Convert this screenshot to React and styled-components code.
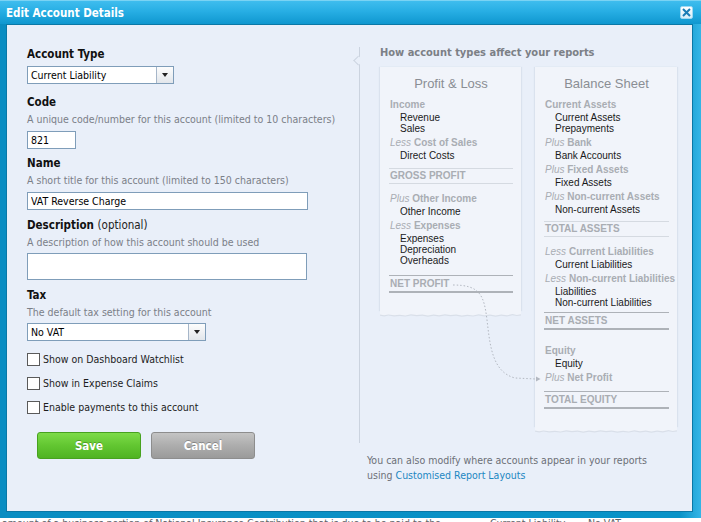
import React from "react";
import styled, { createGlobalStyle, css } from "styled-components";

const UI = `"DejaVu Sans Condensed", "DejaVu Sans", Tahoma, sans-serif`;
const SANS = `"Liberation Sans", Arial, Helvetica, sans-serif`;

const GlobalStyle = createGlobalStyle`
  html, body { margin: 0; padding: 0; background: #ffffff; }
  body { overflow: hidden; }
  *, *::before, *::after { box-sizing: border-box; }
`;

const Page = styled.div`
  width: 701px;
  height: 522px;
  overflow: hidden;
  background: #fff;
  display: flex;
  flex-direction: column;
`;

const Dialog = styled.div`
  flex: none;
  height: 518px;
  display: flex;
  flex-direction: column;
  background: linear-gradient(90deg, #0a8dc2 0%, #0993c8 97%, #35b5e6 100%);
`;

const TitleBar = styled.div`
  flex: none;
  height: 24px;
  display: flex;
  align-items: center;
  justify-content: space-between;
  padding: 0 8px 0 6px;
  background: linear-gradient(180deg, #3fbdee 0%, #27aee4 45%, #0f97cf 100%);
  border-top: 1px solid #7ad3f4;
`;

const Title = styled.h1`
  margin: 0;
  font: bold 11.5px/14px ${UI};
  color: #fff;
`;

const CloseButton = styled.button`
  width: 13px;
  height: 13px;
  padding: 0;
  border: 1px solid #9fd8f2;
  border-radius: 2px;
  background: linear-gradient(#ffffff, #d6edf9);
  display: flex;
  align-items: center;
  justify-content: center;
`;

const Body = styled.div`
  flex: 1;
  margin: 0 8px 6px 6px;
  background: #e9eff9;
  border: 1px solid #0a78a6;
  display: grid;
  grid-template-columns: 352px 1fr;
`;

/* ---------- left form ---------- */

const Form = styled.div`
  display: flex;
  flex-direction: column;
  align-items: flex-start;
  padding: 21px 0 0 20px;
`;

const FieldLabel = styled.div`
  font: bold 11.5px/16px ${UI};
  color: #111;
  margin-top: ${(p) => p.$mt || 0}px;
`;

const Optional = styled.span`
  font-weight: normal;
  color: #222;
`;

const Help = styled.div`
  font: 10.5px/18px ${UI};
  color: #7b8088;
`;

const fieldBox = css`
  display: block;
  height: ${(p) => p.$h || 18}px;
  width: ${(p) => p.$w}px;
  margin: ${(p) => p.$mt || 0}px 0 0 0;
  border: 1px solid #7f9db9;
  background: #fff;
  font: 10.5px/16px ${UI};
  color: #000;
  padding: 0 3px;
  outline: none;
`;

const TextInput = styled.input`
  ${fieldBox}
`;

const TextArea = styled.textarea`
  ${fieldBox}
  resize: none;
`;

const Select = styled.div`
  ${fieldBox}
  display: flex;
  padding: 0;
`;

const SelectValue = styled.span`
  flex: 1;
  padding-left: 3px;
  font: 10.5px/16px ${UI};
  color: #000;
`;

const SelectButton = styled.span`
  width: 17px;
  border-left: 1px solid #a6b6c9;
  background: linear-gradient(#fdfdfd, #e2e6eb);
  display: flex;
  align-items: center;
  justify-content: center;
  &::after {
    content: "";
    border-left: 3.5px solid transparent;
    border-right: 3.5px solid transparent;
    border-top: 4px solid #222;
  }
`;

const Checks = styled.div`
  margin-top: 6px;
  display: flex;
  flex-direction: column;
`;

const CheckRow = styled.label`
  height: 24px;
  display: flex;
  align-items: center;
  gap: 3px;
  font: 10.5px/14px ${UI};
  color: #1d1d1d;
`;

const CheckBox = styled.input`
  appearance: none;
  margin: 0;
  width: 13px;
  height: 13px;
  border: 1px solid #5a5a5a;
  background: #fff;
`;

const Buttons = styled.div`
  display: flex;
  gap: 10px;
  margin: 13px 0 0 10px;
`;

const Button = styled.button`
  width: 104px;
  height: 27px;
  border-radius: 3px;
  font: bold 11.5px/14px ${UI};
  color: #fff;
  text-shadow: 0 -1px 0 rgba(0, 0, 0, 0.25);
  padding: 0;
  ${(p) =>
    p.$variant === "save"
      ? css`
          background: linear-gradient(#7ddb48 0%, #62c631 50%, #4fb322 100%);
          border: 1px solid #47a21f;
        `
      : css`
          background: linear-gradient(#c4c4c4 0%, #adadad 50%, #9a9a9a 100%);
          border: 1px solid #8d8d8d;
        `}
`;

/* ---------- right diagram ---------- */

const RightColumn = styled.div`
  display: flex;
  flex-direction: column;
  padding-top: 22px;
`;

const Diagram = styled.div`
  position: relative;
  border-left: 1px solid #cbd3df;
  padding: 0 0 9px 20px;
  &::before {
    content: "";
    position: absolute;
    left: -5.5px;
    top: 10px;
    width: 6.5px;
    height: 6.5px;
    transform: rotate(45deg);
    border-left: 1px solid #cbd3df;
    border-bottom: 1px solid #cbd3df;
    background: #e9eff9;
  }
`;

const DiagramHeading = styled.div`
  font: bold 11px/12px ${UI};
  color: #7c8086;
`;

const Cards = styled.div`
  display: flex;
  align-items: flex-start;
  gap: 14px;
  margin-top: 8px;
`;

const Card = styled.div`
  width: ${(p) => p.$w}px;
  display: flex;
  flex-direction: column;
`;

const CardBody = styled.div`
  background: #f1f4fa;
  padding: 0 8px 12px 9px;
  box-shadow: -1px 0 1px rgba(150, 165, 190, 0.18), 1px 0 1px rgba(150, 165, 190, 0.18);
  display: flex;
  flex-direction: column;
  font-family: ${SANS};
`;

const CardTitle = styled.div`
  font: 13px/18px ${SANS};
  color: #8a8e94;
  text-align: center;
  margin: 8px 0 3px;
`;

const SectionLabel = styled.div`
  font: bold 10px/12px ${SANS};
  color: #a9adb3;
  white-space: nowrap;
  margin-top: ${(p) => (p.$mt != null ? p.$mt : 3)}px;
  padding-left: 1px;
`;

const Prefix = styled.i`
  font-weight: normal;
`;

const Items = styled.div`
  margin-top: 1px;
  padding-left: 11px;
  display: flex;
  flex-direction: column;
`;

const Item = styled.div`
  font: 10px/11px ${SANS};
  color: #1a1a1a;
  white-space: nowrap;
`;

const Total = styled.div`
  margin: ${(p) => p.$mt}px 0 6px;
  padding-left: 1px;
  font: bold 10px/${(p) => (p.$strong ? 15 : 14)}px ${SANS};
  color: #a9adb3;
  ${(p) =>
    p.$strong
      ? css`
          border-top: 1px solid #aeb2b8;
          border-bottom: 2px solid #aeb2b8;
        `
      : css`
          border-top: 1px solid #d5dae1;
          border-bottom: 1px solid #d5dae1;
        `}
`;

const TornSvg = styled.svg`
  display: block;
  width: 100%;
  height: 7px;
`;

const Connector = styled.svg`
  position: absolute;
  left: 0;
  top: 0;
  width: 100%;
  height: 100%;
  pointer-events: none;
  overflow: visible;
`;

const Footnote = styled.p`
  margin: 10px 0 0;
  padding-left: 8px;
  font: 10.5px/15px ${UI};
  color: #6c7077;
`;

const Link = styled.a`
  color: #1c87c2;
  text-decoration: none;
`;

/* ---------- page behind ---------- */

const BehindStrip = styled.div`
  flex: 1;
  overflow: hidden;
  display: grid;
  grid-template-columns: 488px 98px 1fr;
  padding-left: 2px;
  font: 10.5px/11px ${UI};
  color: #5d6166;
  white-space: nowrap;
`;

const BehindText = styled.span`
  overflow: hidden;
`;

const TORN =
  "M0 0 H100 V3.2 L97 3.9 L94 3.1 L90 4.3 L86 3.6 L82 4.5 L78 3.5 L74 4.2 L70 3.3 L66 4.4 L62 3.7 L58 4.6 L54 3.6 L50 4.1 L46 3.2 L42 4.3 L38 3.6 L34 4.5 L30 3.5 L26 4.1 L22 3.3 L18 4.4 L14 3.7 L10 4.3 L6 3.4 L3 4.2 L0 3.6 Z";

function TornEdge() {
  return (
    <TornSvg viewBox="0 0 100 7" preserveAspectRatio="none">
      <path d={TORN} transform="translate(0 1.2)" fill="#d9dfe9" />
      <path d={TORN} fill="#f1f4fa" />
    </TornSvg>
  );
}

export default function App() {
  return (
    <>
      <GlobalStyle />
      <Page>
        <Dialog>
          <TitleBar>
            <Title>Edit Account Details</Title>
            <CloseButton aria-label="Close">
              <svg width="9" height="9" viewBox="0 0 9 9">
                <path d="M1 1 L8 8 M8 1 L1 8" stroke="#1a7cb6" strokeWidth="2" />
              </svg>
            </CloseButton>
          </TitleBar>
          <Body>
            <Form>
              <FieldLabel>Account Type</FieldLabel>
              <Select $w={147} $mt={4}>
                <SelectValue>Current Liability</SelectValue>
                <SelectButton />
              </Select>

              <FieldLabel $mt={10}>Code</FieldLabel>
              <Help>A unique code/number for this account (limited to 10 characters)</Help>
              <TextInput $w={49} $mt={3} defaultValue="821" />

              <FieldLabel $mt={6}>Name</FieldLabel>
              <Help>A short title for this account (limited to 150 characters)</Help>
              <TextInput $w={281} $mt={3} defaultValue="VAT Reverse Charge" />

              <FieldLabel $mt={7}>
                Description <Optional>(optional)</Optional>
              </FieldLabel>
              <Help>A description of how this account should be used</Help>
              <TextArea $w={280} $h={27} $mt={2} />

              <FieldLabel $mt={7}>Tax</FieldLabel>
              <Help>The default tax setting for this account</Help>
              <Select $w={179} $mt={2}>
                <SelectValue>No VAT</SelectValue>
                <SelectButton />
              </Select>

              <Checks>
                <CheckRow>
                  <CheckBox type="checkbox" />
                  Show on Dashboard Watchlist
                </CheckRow>
                <CheckRow>
                  <CheckBox type="checkbox" />
                  Show in Expense Claims
                </CheckRow>
                <CheckRow>
                  <CheckBox type="checkbox" />
                  Enable payments to this account
                </CheckRow>
              </Checks>

              <Buttons>
                <Button $variant="save">Save</Button>
                <Button $variant="cancel">Cancel</Button>
              </Buttons>
            </Form>

            <RightColumn>
              <Diagram>
                <DiagramHeading>How account types affect your reports</DiagramHeading>
                <Cards>
                  <Card $w={141}>
                    <CardBody>
                      <CardTitle>Profit &amp; Loss</CardTitle>
                      <SectionLabel>Income</SectionLabel>
                      <Items>
                        <Item>Revenue</Item>
                        <Item>Sales</Item>
                      </Items>
                      <SectionLabel>
                        <Prefix>Less</Prefix> Cost of Sales
                      </SectionLabel>
                      <Items>
                        <Item>Direct Costs</Item>
                      </Items>
                      <Total $mt={7}>GROSS PROFIT</Total>
                      <SectionLabel>
                        <Prefix>Plus</Prefix> Other Income
                      </SectionLabel>
                      <Items>
                        <Item>Other Income</Item>
                      </Items>
                      <SectionLabel>
                        <Prefix>Less</Prefix> Expenses
                      </SectionLabel>
                      <Items>
                        <Item>Expenses</Item>
                        <Item>Depreciation</Item>
                        <Item>Overheads</Item>
                      </Items>
                      <Total $mt={9} $strong>
                        NET PROFIT
                      </Total>
                    </CardBody>
                    <TornEdge />
                  </Card>

                  <Card $w={142}>
                    <CardBody>
                      <CardTitle>Balance Sheet</CardTitle>
                      <SectionLabel>Current Assets</SectionLabel>
                      <Items>
                        <Item>Current Assets</Item>
                        <Item>Prepayments</Item>
                      </Items>
                      <SectionLabel>
                        <Prefix>Plus</Prefix> Bank
                      </SectionLabel>
                      <Items>
                        <Item>Bank Accounts</Item>
                      </Items>
                      <SectionLabel>
                        <Prefix>Plus</Prefix> Fixed Assets
                      </SectionLabel>
                      <Items>
                        <Item>Fixed Assets</Item>
                      </Items>
                      <SectionLabel>
                        <Prefix>Plus</Prefix> Non-current Assets
                      </SectionLabel>
                      <Items>
                        <Item>Non-current Assets</Item>
                      </Items>
                      <Total $mt={6}>TOTAL ASSETS</Total>
                      <SectionLabel>
                        <Prefix>Less</Prefix> Current Liabilities
                      </SectionLabel>
                      <Items>
                        <Item>Current Liabilities</Item>
                      </Items>
                      <SectionLabel>
                        <Prefix>Less</Prefix> Non-current Liabilities
                      </SectionLabel>
                      <Items>
                        <Item>Liabilities</Item>
                        <Item>Non-current Liabilities</Item>
                      </Items>
                      <Total $mt={4} $strong>
                        NET ASSETS
                      </Total>
                      <SectionLabel $mt={9}>Equity</SectionLabel>
                      <Items>
                        <Item>Equity</Item>
                      </Items>
                      <SectionLabel>
                        <Prefix>Plus</Prefix> Net Profit
                      </SectionLabel>
                      <Total $mt={7} $strong>
                        TOTAL EQUITY
                      </Total>
                    </CardBody>
                    <TornEdge />
                  </Card>
                </Cards>

                <Connector>
                  <path
                    d="M93 238 C120 238, 124 248, 127 273 S132 325, 155 331 L176 332"
                    fill="none"
                    stroke="#b3b8c1"
                    strokeWidth="1"
                    strokeDasharray="1.5 2"
                  />
                  <polygon points="176,329.5 180.5,332 176,334.5" fill="#b3b8c1" />
                </Connector>
              </Diagram>

              <Footnote>
                You can also modify where accounts appear in your reports
                <br />
                using <Link href="#">Customised Report Layouts</Link>
              </Footnote>
            </RightColumn>
          </Body>
        </Dialog>
        <BehindStrip>
          <BehindText>
            amount of a business portion of National Insurance Contribution that is due to be paid to the
          </BehindText>
          <BehindText>Current Liability</BehindText>
          <BehindText>No VAT</BehindText>
        </BehindStrip>
      </Page>
    </>
  );
}
